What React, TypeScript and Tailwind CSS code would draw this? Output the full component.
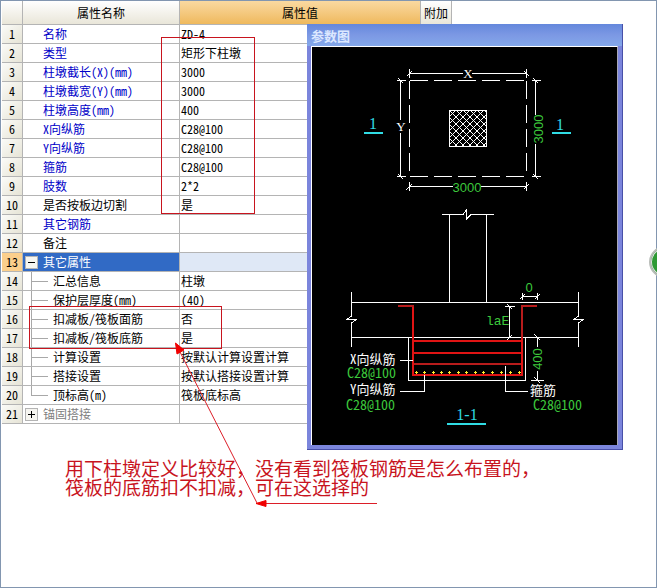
import { useState } from "react";
import { clsx } from "clsx";

type Row = {
  no: number;
  name: string;
  value: string;
  tone: "key" | "plain" | "muted" | "selected";
  toggle?: boolean;
  child?: boolean;
};

const rows: Row[] = [
  { no: 1, name: "名称", value: "ZD-4", tone: "key" },
  { no: 2, name: "类型", value: "矩形下柱墩", tone: "key" },
  { no: 3, name: "柱墩截长(X)(mm)", value: "3000", tone: "key" },
  { no: 4, name: "柱墩截宽(Y)(mm)", value: "3000", tone: "key" },
  { no: 5, name: "柱墩高度(mm)", value: "400", tone: "key" },
  { no: 6, name: "X向纵筋", value: "C28@100", tone: "key" },
  { no: 7, name: "Y向纵筋", value: "C28@100", tone: "key" },
  { no: 8, name: "箍筋", value: "C28@100", tone: "key" },
  { no: 9, name: "肢数", value: "2*2", tone: "key" },
  { no: 10, name: "是否按板边切割", value: "是", tone: "plain" },
  { no: 11, name: "其它钢筋", value: "", tone: "key" },
  { no: 12, name: "备注", value: "", tone: "plain" },
  { no: 13, name: "其它属性", value: "", tone: "selected", toggle: true },
  { no: 14, name: "汇总信息", value: "柱墩", tone: "plain", child: true },
  { no: 15, name: "保护层厚度(mm)", value: "(40)", tone: "plain", child: true },
  { no: 16, name: "扣减板/筏板面筋", value: "否", tone: "plain", child: true },
  { no: 17, name: "扣减板/筏板底筋", value: "是", tone: "plain", child: true },
  { no: 18, name: "计算设置", value: "按默认计算设置计算", tone: "plain", child: true },
  { no: 19, name: "搭接设置", value: "按默认搭接设置计算", tone: "plain", child: true },
  { no: 20, name: "顶标高(m)", value: "筏板底标高", tone: "plain", child: true },
  { no: 21, name: "锚固搭接", value: "", tone: "muted", toggle: true },
];

const toneClass = {
  key: "text-[#0000c8]",
  plain: "text-black",
  muted: "text-[#808080]",
  selected: "bg-[#316ac5] text-white",
};

const stirrupDots = [415, 423, 432, 440, 448, 457, 465, 474, 482, 491, 500, 509, 518];

function PropertyTable() {
  const [open, setOpen] = useState(true);
  const visible = rows.filter((row) => open || !row.child);

  return (
    <table className="ml-px w-[450px] table-fixed border-separate border-spacing-0 text-left text-xs leading-[18px]">
      <colgroup>
        <col className="w-[21px]" />
        <col className="w-[157px]" />
        <col className="w-[241px]" />
        <col className="w-[31px]" />
      </colgroup>
      <thead>
        <tr className="h-6 text-center">
          <th className="border-r border-b border-[#b4b4b4] bg-linear-to-b from-white to-[#e9e6d9] p-0" />
          <th className="border-r border-b border-[#b4b4b4] bg-linear-to-b from-white to-[#e9e6d9] p-0 font-normal">
            属性名称
          </th>
          <th className="border-r border-b border-[#b4b4b4] bg-linear-to-b from-[#fad9a0] to-[#efb95c] p-0 font-normal">
            属性值
          </th>
          <th className="border-r border-b border-[#b4b4b4] bg-linear-to-b from-white to-[#e9e6d9] p-0 font-normal">
            附加
          </th>
        </tr>
      </thead>
      <tbody>
        {visible.map((row) => (
          <tr key={row.no} className="h-[19px]">
            <th
              className={clsx(
                "border-r border-b border-[#b4b4b4] p-0 text-center font-normal",
                row.tone === "selected"
                  ? "bg-[#fbcf8c]"
                  : "bg-linear-to-br from-[#fbfbf8] to-[#e6e4d6]"
              )}
            >
              {row.no}
            </th>
            <td className={clsx("border-r border-b border-[#b4b4b4] p-0", toneClass[row.tone])}>
              <div className="flex h-[18px] items-center">
                {row.toggle && (
                  <button
                    type="button"
                    aria-label={row.name}
                    onClick={() => row.tone === "selected" && setOpen(!open)}
                    className="ml-0.5 flex h-[13px] w-[13px] items-center justify-center border border-[#b4b4b4] bg-[#f6f5f0] text-black"
                  >
                    <svg viewBox="0 0 9 9" className="h-[9px] w-[9px]" stroke="currentColor" fill="none">
                      <path d={row.tone === "selected" && open ? "M1 4.5H8" : "M1 4.5H8M4.5 1V8"} />
                    </svg>
                  </button>
                )}
                {row.child && (
                  <span className="ml-2 flex h-full w-[17px] flex-col">
                    <span className="h-2.5 border-b border-l border-[#a8a8a8]" />
                    {row.no !== 20 && <span className="h-2 border-l border-[#a8a8a8]" />}
                  </span>
                )}
                <span className={row.toggle || row.child ? "pl-[5px]" : "pl-5"}>{row.name}</span>
              </div>
            </td>
            <td
              colSpan={2}
              className={clsx(
                "border-b border-[#b4b4b4] py-0 pr-0 pl-px",
                row.tone === "selected" && "bg-[#dfe8f6]"
              )}
            >
              {row.value}
            </td>
          </tr>
        ))}
      </tbody>
    </table>
  );
}

function SectionDrawing() {
  return (
    <svg
      viewBox="312 47 305 398"
      className="block h-[398px] w-[305px] bg-black"
      fill="none"
      stroke="white"
      shapeRendering="crispEdges"
    >
      <defs>
        <pattern id="hatch" width="7" height="7" x="449" y="110" patternUnits="userSpaceOnUse">
          <path d="M-1 -1L8 8M8 -1L-1 8" />
        </pattern>
      </defs>

      {/* plan */}
      <path d="M409.5 80.5H526.5M409.5 176.5H526.5M409.5 80.5V176.5M526.5 80.5V176.5" strokeDasharray="18 6" />
      <rect x="449.5" y="110.5" width="37" height="36" fill="url(#hatch)" />
      <path d="M409.5 73.5H463M472 73.5H526.5M409.5 69V78M526.5 69V78M407 76L412 71M524 71L529 76" />
      <path d="M400.5 80.5V120M400.5 133V176.5M397 80.5H406M397 176.5H406M398 78L403 83M398 174L403 179" />
      <path d="M409.5 186.5H453M481 186.5H526.5M409.5 182V191M526.5 182V191M406 190L412 184M524 189L529 184" />
      <path d="M535.5 80.5V115M535.5 144V176.5M532 80.5H541M532 176.5H541M533 78L538 83M533 174L538 179" />

      {/* column, slab and cap */}
      <path d="M442 214.5H463L466.5 210V219L471 214.5H494M449.5 214.5V302.5M486.5 214.5V302.5" />
      <path d="M351.5 302.5H578.5M351.5 337.5H578.5M408.5 337.5V380.5H525.5V337.5" />
      <path d="M351.5 292V316L347 319.5H356L351.5 323V347M578.5 292V316L574 319.5H583L578.5 323V347" />

      {/* bars */}
      <g stroke="#e01414" strokeWidth="2">
        <path d="M413 305V375H522V305M413 341H522M413 353H522" />
        <path d="M398 306H414M537 306H522V338M414 364H521" stroke="#b81c1c" />
      </g>
      {stirrupDots.map((x) => (
        <path key={x} d={`M${x} 372.5h3M${x + 1.5} 371v3`} stroke="#ffee30" />
      ))}

      {/* leaders and small dimensions */}
      <path d="M400 360.5H413M400 391.5H424.5V375M505.5 366V391.5H528" />
      <path d="M509.5 306V338M505 306.5H515M507 340L512 335M507 304L512 309" />
      <path d="M522 296.5H538M522.5 293V300M537.5 293V300M520 299L525 294M535 299L540 294" />
      <path d="M537.5 337.5V347M537.5 371V380.5M531 380.5H544M534 334L540 340M534 377L540 383" />
      <path d="M364 133H383M552 133H571M447 424H486" stroke="#30dce4" strokeWidth="2" />

      <g stroke="none" fill="white" fontSize="13">
        <text x="468" y="78" textAnchor="middle" className="font-['Liberation_Serif',serif]">X</text>
        <text x="401" y="131" textAnchor="middle" className="font-['Liberation_Serif',serif]">Y</text>
        <text x="350" y="364">X向纵筋</text>
        <text x="350" y="394">Y向纵筋</text>
        <text x="530" y="395">箍筋</text>
      </g>
      <g stroke="none" fill="#3cc83c" fontSize="14">
        <text x="347" y="378">C28@100</text>
        <text x="346" y="410">C28@100</text>
        <text x="533" y="410">C28@100</text>
      </g>
      <g stroke="none" fill="#3cc83c" fontSize="13" className="font-['Liberation_Sans',sans-serif]">
        <text x="467" y="192" textAnchor="middle">3000</text>
        <text x="543" y="129" textAnchor="middle" transform="rotate(-90 543 129)">3000</text>
        <text x="529" y="292" textAnchor="middle">0</text>
        <text x="542" y="359" textAnchor="middle" transform="rotate(-90 542 359)">400</text>
        <text x="486" y="325" className="font-['Liberation_Mono',monospace]">laE</text>
      </g>
      <g
        stroke="none"
        fill="#30dce4"
        fontSize="16"
        textAnchor="middle"
        className="font-['Liberation_Serif',serif]"
      >
        <text x="373" y="129">1</text>
        <text x="560" y="130">1</text>
        <text x="467" y="420">1-1</text>
      </g>
    </svg>
  );
}

function ParameterWindow() {
  return (
    <section className="absolute top-6 left-[307px] border-r border-b border-[#4850a8] bg-[#7b85dc] px-1 pb-1">
      <h2 className="-mx-1 h-[22px] bg-linear-to-b from-[#6488dc] via-[#7c98e4] to-[#84a8ea] pl-1 text-[13px] leading-6 font-bold text-[#dce8ff]">
        参数图
      </h2>
      <div className="border-t border-r border-l border-t-white border-r-[#a8a8b8] border-l-white">
        <SectionDrawing />
      </div>
    </section>
  );
}

function Markup() {
  return (
    <svg
      viewBox="0 0 560 520"
      className="pointer-events-none absolute top-0 left-0 h-[520px] w-[560px]"
      fill="none"
      stroke="#c8141e"
    >
      <rect x="161.5" y="37.5" width="93" height="176" />
      <rect x="29.5" y="306.5" width="192" height="42" />
      <path d="M257 503L180 352M262 503.5H377" stroke="#dc1e28" />
      <path d="M175.5 343L184 350L177 354ZM256 503.5L266 500.5V506.5Z" fill="#f00000" stroke="#f00000" />
    </svg>
  );
}

export default function App() {
  return (
    <main className="relative min-h-screen overflow-hidden bg-white font-['Noto_Sans_Mono_CJK_SC','Noto_Sans_CJK_SC',monospace] text-black">
      <div className="pt-px pl-px">
        <PropertyTable />
      </div>
      <ParameterWindow />
      <p className="mt-[34px] pl-[65px] text-[19px] leading-[19px] font-light text-[#c8141e]">
        用下柱墩定义比较好，没有看到筏板钢筋是怎么布置的，
        <br />
        筏板的底筋扣不扣减，可在这选择的
      </p>
      <Markup />
      <div className="pointer-events-none absolute inset-0 border border-[#8296b0]" />
      <div className="absolute top-[246px] -right-6 h-8 w-8 rounded-full border-2 border-[#b8bcb8] bg-[#2e9a34] ring-1 ring-[#e4e4e4] ring-inset" />
    </main>
  );
}
